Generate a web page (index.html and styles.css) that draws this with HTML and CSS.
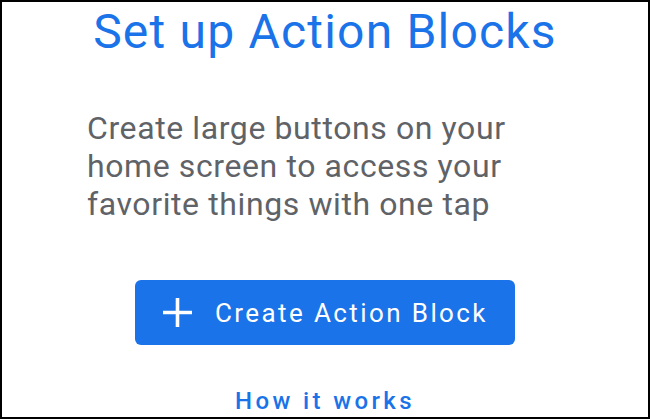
FILE: index.html
```html
<!DOCTYPE html>
<html lang="en">
<head>
    <meta charset="UTF-8">
    <meta name="viewport" content="width=device-width, initial-scale=1.0">
    <title>Set up Action Blocks</title>
    <link rel="stylesheet" href="styles.css">
</head>
<body>
    <div class="frame">
        <h1 class="title">Set up Action Blocks</h1>
        <p class="intro">Create large buttons on your home screen to access your favorite things with one tap</p>
        <button class="create-button">
            <svg class="plus" width="29" height="29" viewBox="0 0 29 29">
                <path d="M14.5 0v29M0 14.5h29" stroke="#fff" stroke-width="3.6" fill="none"/>
            </svg>
            <span>Create Action Block</span>
        </button>
        <a class="how-link" href="#">How it works</a>
    </div>
</body>
</html>
```

FILE: styles.css
```css
html, body {
    margin: 0;
    padding: 0;
    background: #fff;
}
body {
    font-family: Roboto, "Open Sans", Arial, sans-serif;
}
.frame {
    width: 650px;
    height: 419px;
    box-sizing: border-box;
    border: 2px solid #000;
    overflow: hidden;
    display: flex;
    flex-direction: column;
    align-items: center;
}
.title {
    margin: 0;
    margin-top: 2px;
    font-size: 48px;
    font-weight: 400;
    line-height: 56px;
    letter-spacing: 1.2px;
    color: #1a73e8;
}
.intro {
    margin: 49px 0 0 0;
    width: 476px;
    font-size: 32px;
    line-height: 38px;
    letter-spacing: 0.6px;
    color: #5f6368;
}
.create-button {
    margin-top: 57px;
    width: 380px;
    height: 65px;
    border: none;
    border-radius: 6px;
    background: #1a73e8;
    color: #fff;
    display: flex;
    align-items: center;
    padding: 0 0 0 28px;
    gap: 23px;
    font-family: inherit;
    font-size: 26px;
    letter-spacing: 2.4px;
}
.plus {
    flex: none;
}
.how-link {
    margin-top: 42px;
    color: #1a73e8;
    text-decoration: none;
    font-size: 24px;
    font-weight: 500;
    letter-spacing: 3.4px;
}
```
